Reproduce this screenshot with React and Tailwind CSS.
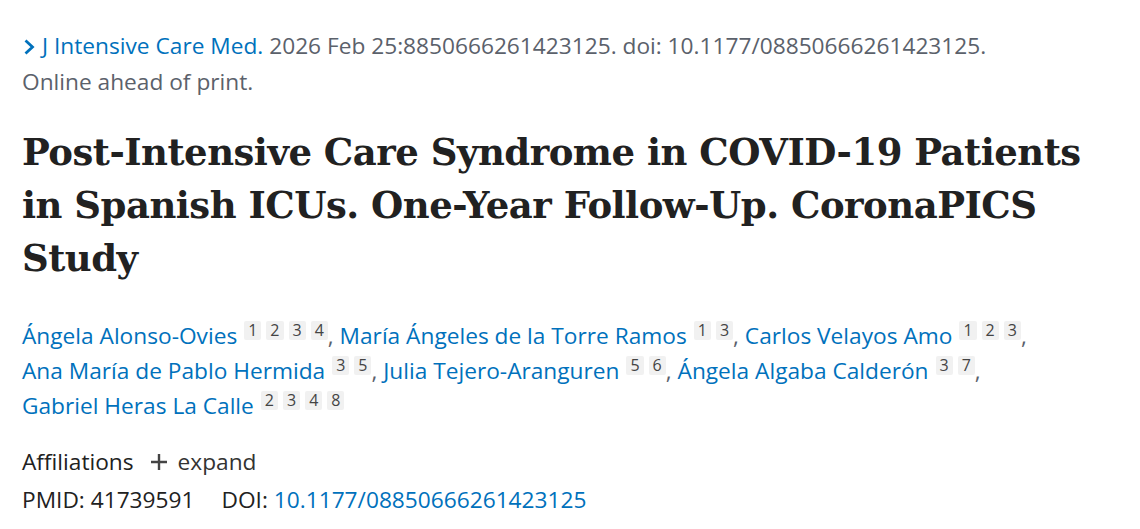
import React from 'react';

const authors = [
  { name: 'Ángela Alonso-Ovies', affs: [1, 2, 3, 4] },
  { name: 'María Ángeles de la Torre Ramos', affs: [1, 3] },
  { name: 'Carlos Velayos Amo', affs: [1, 2, 3] },
  { name: 'Ana María de Pablo Hermida', affs: [3, 5] },
  { name: 'Julia Tejero-Aranguren', affs: [5, 6] },
  { name: 'Ángela Algaba Calderón', affs: [3, 7] },
  { name: 'Gabriel Heras La Calle', affs: [2, 3, 4, 8] },
];

function Chevron() {
  return (
    <svg viewBox="0 0 12 18" className="mr-[7px] ml-[1px] inline-block h-[18px] w-[12px] align-[-2px]">
      <path d="M2.5 2.5 L9.5 9 L2.5 15.5" fill="none" stroke="#0071bc" strokeWidth="2.8" />
    </svg>
  );
}

function Plus() {
  return (
    <svg viewBox="0 0 18 18" className="mr-[10px] h-[18px] w-[18px]">
      <path d="M9 1 V17 M1 9 H17" stroke="#444" strokeWidth="2.4" />
    </svg>
  );
}

export default function App() {
  return (
    <div className="min-h-[529px] bg-white px-[22px] pt-[28px] font-['Open_Sans',sans-serif] text-[22.7px] text-[#212121]">
      <div className="leading-[36px] text-[#5b616b]">
        <a className="text-[#0071bc]" href="#">
          <Chevron />J Intensive Care Med.
        </a>{' '}
        2026 Feb 25:8850666261423125. doi: 10.1177/08850666261423125.
        <br />
        Online ahead of print.
      </div>

      <h1 className="mt-[26px] font-['DejaVu_Serif',serif] text-[37px] font-bold leading-[53px] tracking-[-0.5px] text-[#212121]">
        Post-Intensive Care Syndrome in COVID-19 Patients in Spanish ICUs. One-Year Follow-Up. CoronaPICS Study
      </h1>

      <div className="mt-[33px] leading-[35px]">
        {authors.map((a, i) => (
          <React.Fragment key={a.name}>
            <span className="whitespace-nowrap">
              <a className="text-[#0071bc]" href="#">{a.name}</a>
              <span className="ml-[7px] inline-flex gap-[5px] align-[8px]">
                {a.affs.map((n) => (
                  <span key={n} className="rounded-[2px] bg-[#f1f1f1] px-[4px] text-[16px] leading-[19px] text-[#444]">
                    {n}
                  </span>
                ))}
              </span>
              {i < authors.length - 1 && <span className="text-[#5b616b]">,</span>}
            </span>{' '}
          </React.Fragment>
        ))}
      </div>

      <div className="mt-[21px] flex items-center leading-[36px]">
        <span>Affiliations</span>
        <button className="ml-[16px] flex items-center text-[#333]">
          <Plus />expand
        </button>
      </div>
      <div className="mt-[2px] leading-[36px]">
        <span>PMID: 41739591</span>
        <span className="ml-[27px]">DOI: </span>
        <a className="text-[#0071bc]" href="#">10.1177/08850666261423125</a>
      </div>
    </div>
  );
}
